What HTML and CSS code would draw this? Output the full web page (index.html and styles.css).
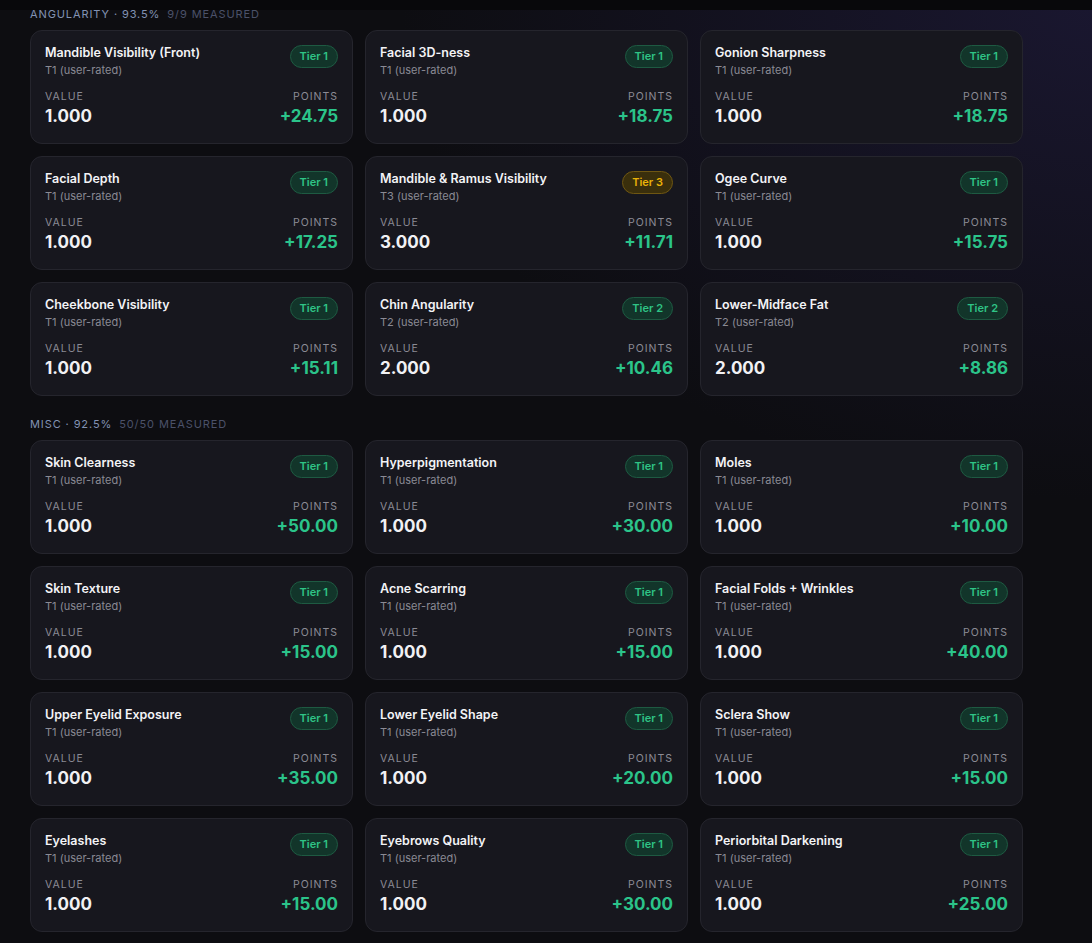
FILE: index.html
```html
<!DOCTYPE html>
<html lang="en">

<head>
    <meta charset="utf-8">
    <meta name="viewport" content="width=device-width, initial-scale=1.0">
    <title>Scores</title>
    <link rel="stylesheet" href="styles.css">
</head>

<body>
    <div class="topbar"></div>
    <main>
        <section class="gruppe" data-gruppe="angularity">
            <h2 class="gruppe_titel">Angularity · 93.5% <span class="maalt">9/9 measured</span></h2>
            <div class="liste"></div>
        </section>
        <section class="gruppe" data-gruppe="misc">
            <h2 class="gruppe_titel">Misc · 92.5% <span class="maalt">50/50 measured</span></h2>
            <div class="liste"></div>
        </section>
    </main>

    <template>
        <article class="kort">
            <div class="kort_top">
                <div>
                    <h3 class="navn"></h3>
                    <p class="kilde"></p>
                </div>
                <span class="tier"></span>
            </div>
            <div class="kort_bund">
                <div>
                    <p class="label">Value</p>
                    <p class="vaerdi"></p>
                </div>
                <div class="hoejre">
                    <p class="label">Points</p>
                    <p class="point"></p>
                </div>
            </div>
        </article>
    </template>

    <script>
        const data = {
            angularity: [
                ["Mandible Visibility (Front)", 1, "1.000", "+24.75"],
                ["Facial 3D-ness", 1, "1.000", "+18.75"],
                ["Gonion Sharpness", 1, "1.000", "+18.75"],
                ["Facial Depth", 1, "1.000", "+17.25"],
                ["Mandible & Ramus Visibility", 3, "3.000", "+11.71"],
                ["Ogee Curve", 1, "1.000", "+15.75"],
                ["Cheekbone Visibility", 1, "1.000", "+15.11"],
                ["Chin Angularity", 2, "2.000", "+10.46"],
                ["Lower-Midface Fat", 2, "2.000", "+8.86"]
            ],
            misc: [
                ["Skin Clearness", 1, "1.000", "+50.00"],
                ["Hyperpigmentation", 1, "1.000", "+30.00"],
                ["Moles", 1, "1.000", "+10.00"],
                ["Skin Texture", 1, "1.000", "+15.00"],
                ["Acne Scarring", 1, "1.000", "+15.00"],
                ["Facial Folds + Wrinkles", 1, "1.000", "+40.00"],
                ["Upper Eyelid Exposure", 1, "1.000", "+35.00"],
                ["Lower Eyelid Shape", 1, "1.000", "+20.00"],
                ["Sclera Show", 1, "1.000", "+15.00"],
                ["Eyelashes", 1, "1.000", "+15.00"],
                ["Eyebrows Quality", 1, "1.000", "+30.00"],
                ["Periorbital Darkening", 1, "1.000", "+25.00"]
            ]
        };

        const skabelon = document.querySelector("template").content;

        document.querySelectorAll(".gruppe").forEach(gruppe => {
            const dest = gruppe.querySelector(".liste");
            data[gruppe.dataset.gruppe].forEach(ret => {
                const klon = skabelon.cloneNode(true);
                klon.querySelector(".navn").textContent = ret[0];
                klon.querySelector(".kilde").textContent = "T" + ret[1] + " (user-rated)";
                klon.querySelector(".tier").textContent = "Tier " + ret[1];
                klon.querySelector(".tier").classList.add("tier" + ret[1]);
                klon.querySelector(".vaerdi").textContent = ret[2];
                klon.querySelector(".point").textContent = ret[3];
                dest.appendChild(klon);
            });
        });
    </script>
</body>

</html>
```

FILE: styles.css
```css
* {
    margin: 0;
    box-sizing: border-box;
}

body {
    font-family: Inter, 'Noto Sans', sans-serif;
    background-color: #0d0d11;
    background-image: radial-gradient(ellipse 700px 500px at 1100px 0px, #1a1730 0%, rgba(26, 23, 48, 0) 100%);
    background-attachment: fixed;
    color: #f1f1f4;
    height: 943px;
    overflow: hidden;
}

.topbar {
    position: fixed;
    top: 0;
    left: 0;
    right: 0;
    height: 10px;
    background-color: #08080b;
    z-index: 2;
}

main {
    padding: 7px 0 0 30px;
    width: 1023px;
}

.gruppe {
    margin-bottom: 21px;
}

.gruppe_titel {
    font-size: 11px;
    line-height: 14px;
    font-weight: 400;
    letter-spacing: 0.9px;
    text-transform: uppercase;
    color: #8292b3;
    margin-bottom: 9px;
}

.maalt {
    color: #4b5169;
    margin-left: 3px;
}

.liste {
    display: grid;
    grid-template-columns: repeat(3, 1fr);
    gap: 12px;
}

.kort {
    height: 114px;
    padding: 14px 14px 0 14px;
    background-color: #17171e;
    border: 1px solid #25252d;
    border-radius: 12px;
}

.kort_top {
    display: flex;
    justify-content: space-between;
    align-items: flex-start;
}

.navn {
    font-size: 12.5px;
    line-height: 15px;
    font-weight: 600;
    color: #f3f3f6;
}

.kilde {
    font-size: 11px;
    line-height: 14px;
    margin-top: 3px;
    color: #8a8a94;
}

.tier {
    font-size: 11px;
    line-height: 21px;
    font-weight: 600;
    padding: 0 9px;
    border-radius: 12px;
    border: 1px solid;
}

.tier1,
.tier2 {
    color: #2fc486;
    background-color: #12352a;
    border-color: #1e5a42;
}

.tier3 {
    color: #eab308;
    background-color: #3a2f0c;
    border-color: #6e5612;
}

.kort_bund {
    display: flex;
    justify-content: space-between;
    margin-top: 13px;
}

.hoejre {
    text-align: right;
}

.label {
    font-size: 10.5px;
    line-height: 13px;
    letter-spacing: 1px;
    text-transform: uppercase;
    color: #8b8b95;
}

.vaerdi,
.point {
    font-size: 17px;
    line-height: 22px;
    font-weight: 700;
    margin-top: 2px;
}

.point {
    color: #2bc48a;
}
```
